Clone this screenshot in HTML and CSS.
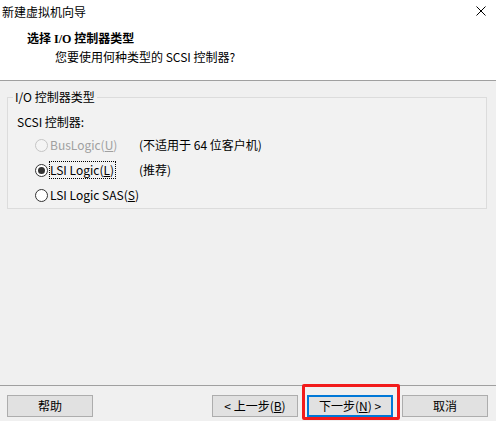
FILE: index.html
```html
<!DOCTYPE html>
<html lang="zh">
<head>
<meta charset="utf-8">
<title>新建虚拟机向导</title>
<link rel="stylesheet" href="styles.css">
</head>
<body>
<div class="window">
  <div class="top">
    <div class="titlebar">
      <span class="title">新建虚拟机向导</span>
      <svg class="close" width="10" height="10" viewBox="0 0 10 10"><path d="M0.5 0.5 L9.5 9.5 M9.5 0.5 L0.5 9.5" stroke="#000" stroke-width="1" fill="none"/></svg>
    </div>
    <div class="header">
      <div class="h-title">选择 I/O 控制器类型</div>
      <div class="h-sub">您要使用何种类型的 SCSI 控制器?</div>
    </div>
  </div>
  <div class="main">
    <fieldset class="group">
      <legend>I/O 控制器类型</legend>
      <div class="inner">
        <div class="label">SCSI 控制器:</div>
        <div class="row disabled">
          <span class="radio"></span>
          <span class="opt">BusLogic(<u>U</u>)</span>
          <span class="note">(不适用于 64 位客户机)</span>
        </div>
        <div class="row">
          <span class="radio checked"></span>
          <span class="opt"><span class="focus">LSI Logic(<u>L</u>)</span></span>
          <span class="note">(推荐)</span>
        </div>
        <div class="row">
          <span class="radio"></span>
          <span class="opt">LSI Logic SAS(<u>S</u>)</span>
        </div>
      </div>
    </fieldset>
  </div>
  <div class="footer">
    <button class="btn">帮助</button>
    <div class="nav">
      <button class="btn">&lt; 上一步(<u>B</u>)</button>
      <div class="highlight"><button class="btn primary">下一步(<u>N</u>) &gt;</button></div>
      <button class="btn">取消</button>
    </div>
  </div>
</div>
</body>
</html>
```

FILE: styles.css
```css
* { box-sizing: border-box; }
html, body { margin: 0; padding: 0; }
body {
  width: 496px;
  height: 421px;
  overflow: hidden;
  font-family: "Noto Sans CJK SC", "Noto Sans", sans-serif;
  font-size: 12px;
  color: #000;
  background: #f0f0f0;
}
.window {
  width: 496px;
  height: 421px;
  display: flex;
  flex-direction: column;
}
.top {
  background: #fff;
  height: 81px;
  border-bottom: 1px solid #a0a0a0;
}
.titlebar {
  height: 24px;
  display: flex;
  align-items: center;
  justify-content: space-between;
  padding: 0 10px 0 2px;
}
.title { line-height: 24px; }
.close { display: block; margin-top: -2px; }
.header { padding: 7px 0 0 27px; }
.h-title {
  font-family: "Liberation Serif", "Noto Sans CJK SC", serif;
  font-weight: bold;
  font-size: 12px;
  line-height: 16px;
}
.h-sub {
  margin-top: 2px;
  padding-left: 28px;
  line-height: 16px;
}
.main {
  height: 304px;
  padding: 0 9px 0 7px;
}
.group {
  margin: 9px 0 0 0;
  padding: 0;
  border: 1px solid #dcdcdc;
  min-width: 0;
  background: #f2f2f2;
}
.group legend {
  margin-left: 5px;
  padding: 0 2px;
  line-height: 14px;
  height: 14px;
}
.inner { padding: 10px 0 1px 9px; }
.label { line-height: 16px; height: 16px; }
.row {
  display: flex;
  align-items: center;
  height: 24px;
  margin-top: 1px;
}
.label + .row { margin-top: 3px; }
.radio {
  width: 13px;
  height: 13px;
  border: 1px solid #333;
  border-radius: 50%;
  background: #fff;
  margin-left: 18px;
  margin-right: 2px;
  display: flex;
  align-items: center;
  justify-content: center;
  flex: none;
}
.radio.checked::after {
  content: "";
  width: 7px;
  height: 7px;
  border-radius: 50%;
  background: #333;
}
.opt {
  width: 89px;
  flex: none;
  line-height: 16px;
  white-space: nowrap;
}
.focus {
  display: inline-block;
  outline: 1px dotted #000;
  padding: 0 1px 0 0;
  line-height: 16px;
}
.note { white-space: nowrap; line-height: 16px; color: #000; }
.disabled .opt { color: #a0a0a0; }
.disabled .radio { border-color: #c5c5c5; background: #f4f4f4; }
.footer {
  border-top: 1px solid #a0a0a0;
  padding: 9px 8px 0 7px;
  display: flex;
  align-items: flex-start;
  justify-content: space-between;
  flex: 1;
}
.nav { display: flex; gap: 9px; }
.btn {
  width: 86px;
  height: 22px;
  padding: 0;
  font-family: "Noto Sans CJK SC", "Noto Sans", sans-serif;
  font-size: 12px;
  line-height: 18px;
  color: #000;
  background: #e1e1e1;
  border: 1px solid #adadad;
  display: block;
}
.btn.primary { border: 2px solid #0078d7; }
.btn u { text-decoration: underline; }
.highlight { position: relative; }
.highlight::after {
  content: "";
  position: absolute;
  left: -5px;
  top: -11px;
  right: -7px;
  bottom: -3px;
  border: 3px solid #f21b1b;
  border-radius: 2px;
  pointer-events: none;
}
```
